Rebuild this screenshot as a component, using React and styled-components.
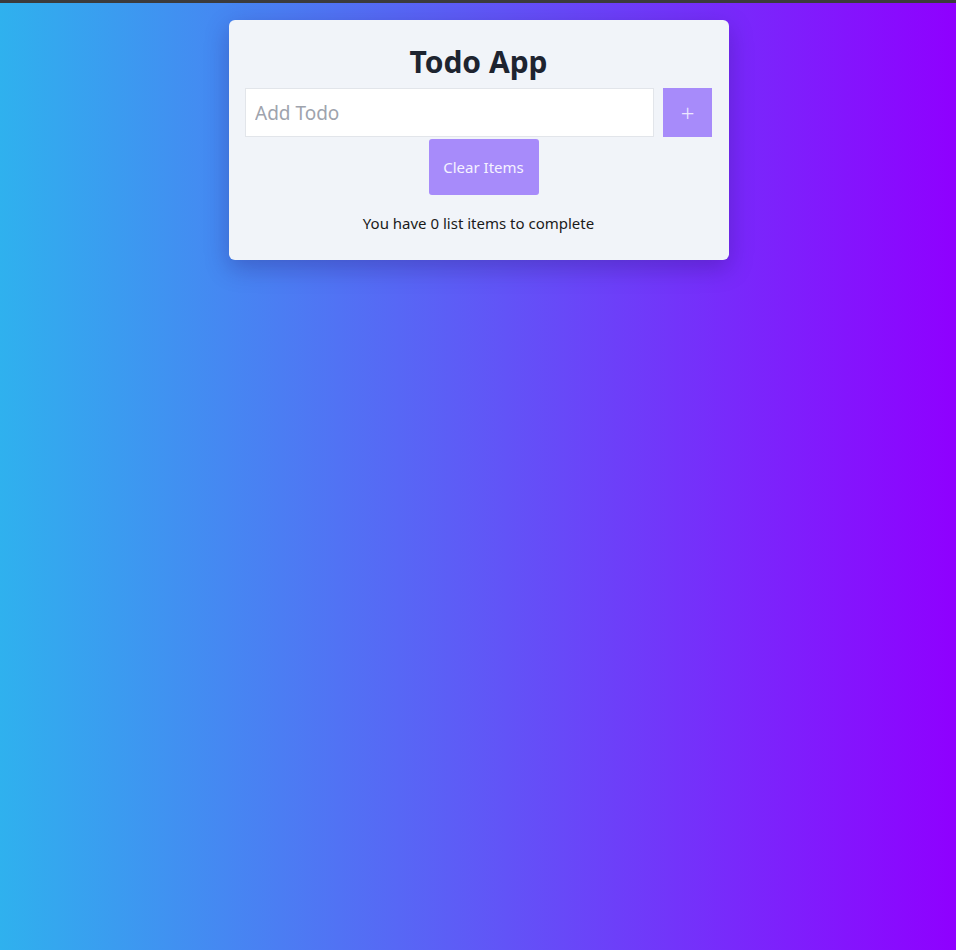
import { useState } from "react";
import styled, { createGlobalStyle } from "styled-components";

const GlobalStyle = createGlobalStyle`
  html, body {
    margin: 0;
    min-height: 100%;
  }
  body {
    min-height: 950px;
    box-sizing: border-box;
    border-top: 3px solid #3b3b3c;
    background: linear-gradient(to right, #2fb1ee, #8f00ff);
    font-family: "Noto Sans", "Open Sans", sans-serif;
  }
`;

const Page = styled.div`
  display: flex;
  justify-content: center;
  padding: 17px 0 0 2px;
`;

const Card = styled.div`
  width: 500px;
  box-sizing: border-box;
  padding: 16px 17px 16px 16px;
  background: #f1f4f9;
  border-radius: 6px;
  box-shadow: 0 8px 24px rgba(30, 10, 90, 0.28);
  display: flex;
  flex-direction: column;
`;

const Title = styled.h1`
  margin: 8px 0 8px;
  font-size: 30px;
  line-height: 36px;
  font-weight: 700;
  text-align: center;
  color: #1e2430;
`;

const Row = styled.div`
  display: flex;
  gap: 9px;
  align-items: flex-start;
`;

const Input = styled.input`
  flex: 1;
  height: 49px;
  box-sizing: border-box;
  padding: 0 9px;
  border: 1px solid #e2e5ea;
  background: #fff;
  outline: none;
  font-family: inherit;
  font-size: 19px;
  color: #1e2430;
  &::placeholder {
    color: #9ea3ad;
  }
`;

const PlusBtn = styled.button`
  width: 49px;
  height: 49px;
  padding: 0;
  border: none;
  background: #a78bfa;
  color: #ece6ff;
  font-family: inherit;
  font-size: 24px;
  font-weight: 300;
  cursor: pointer;
`;

const ClearBtn = styled.button`
  align-self: center;
  margin: 2px 0 0 10px;
  width: 110px;
  height: 56px;
  border: none;
  border-radius: 3px;
  background: #a78bfa;
  color: #f5f2ff;
  font-family: inherit;
  font-size: 15px;
  cursor: pointer;
`;

const Count = styled.p`
  margin: 16px 0 9px;
  font-size: 15px;
  line-height: 24px;
  text-align: center;
  color: #1a1a1a;
`;

export default function App() {
  const [todo, setTodo] = useState("");
  const [items, setItems] = useState([]);

  const addTodo = () => {
    if (!todo.trim()) return;
    setItems([...items, { id: Date.now(), text: todo }]);
    setTodo("");
  };

  return (
    <>
      <GlobalStyle />
      <Page>
        <Card>
          <Title>Todo App</Title>
          <Row>
            <Input
              type="text"
              placeholder="Add Todo"
              value={todo}
              onChange={(e) => setTodo(e.target.value)}
            />
            <PlusBtn onClick={addTodo}>+</PlusBtn>
          </Row>
          <ClearBtn onClick={() => setItems([])}>Clear Items</ClearBtn>
          <Count>You have {items.length} list items to complete</Count>
        </Card>
      </Page>
    </>
  );
}
